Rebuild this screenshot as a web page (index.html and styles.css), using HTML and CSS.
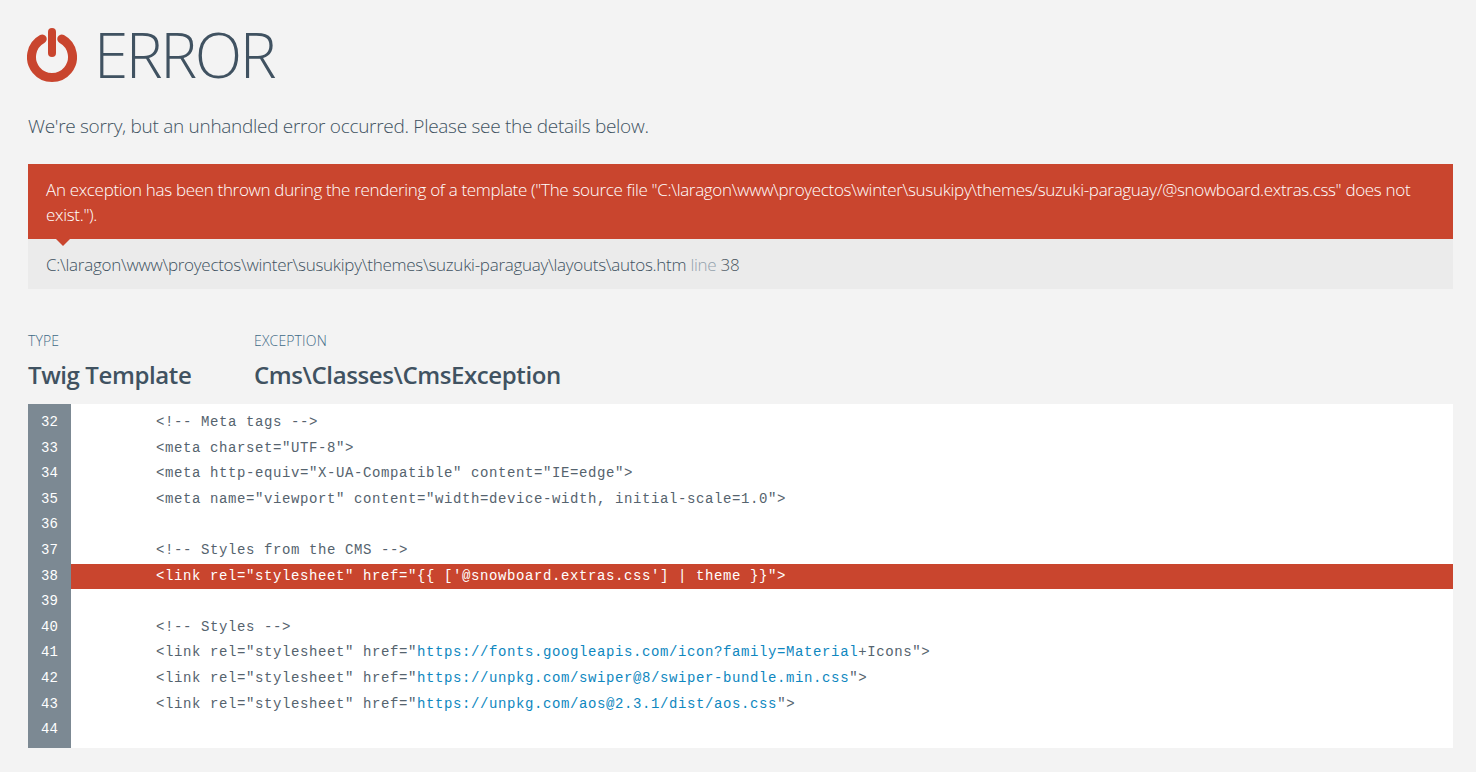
FILE: index.html
```html
<!DOCTYPE html>
<html lang="en">
<head>
<meta charset="utf-8">
<title>Error</title>
<link rel="stylesheet" href="styles.css">
</head>
<body>
<main class="page">
  <h1 class="title">
    <svg class="power" viewBox="0 0 50 56" width="50" height="56" aria-hidden="true">
      <path d="M15.2 12 A20.5 20.5 0 1 0 34.8 12" fill="none" stroke="#c9452e" stroke-width="9" stroke-linecap="round"/>
      <path d="M25 5 V26" fill="none" stroke="#c9452e" stroke-width="8" stroke-linecap="round"/>
    </svg>
    <span>ERROR</span>
  </h1>
  <p class="lead">We're sorry, but an unhandled error occurred. Please see the details below.</p>
  <section class="message">
    <p>An exception has been thrown during the rendering of a template ("The source file "C:\laragon\www\proyectos\winter\susukipy\themes/suzuki-paraguay/@snowboard.extras.css" does not exist.").</p>
  </section>
  <section class="location">C:\laragon\www\proyectos\winter\susukipy\themes\suzuki-paraguay\layouts\autos.htm <span class="muted">line</span> <span class="lineno">38</span></section>
  <section class="meta">
    <div class="meta-col type"><h3>TYPE</h3><p>Twig Template</p></div>
    <div class="meta-col"><h3>EXCEPTION</h3><p>Cms\Classes\CmsException</p></div>
  </section>
  <section class="code">
    <div class="gutter">
      <div>32</div><div>33</div><div>34</div><div>35</div><div>36</div><div>37</div><div>38</div><div>39</div><div>40</div><div>41</div><div>42</div><div>43</div><div>44</div>
    </div>
    <div class="lines">
<div class="line">        &lt;!-- Meta tags --&gt;</div>
<div class="line">        &lt;meta charset="UTF-8"&gt;</div>
<div class="line">        &lt;meta http-equiv="X-UA-Compatible" content="IE=edge"&gt;</div>
<div class="line">        &lt;meta name="viewport" content="width=device-width, initial-scale=1.0"&gt;</div>
<div class="line"> </div>
<div class="line">        &lt;!-- Styles from the CMS --&gt;</div>
<div class="line hl">        &lt;link rel="stylesheet" href="{{ ['@snowboard.extras.css'] | theme }}"&gt;</div>
<div class="line"> </div>
<div class="line">        &lt;!-- Styles --&gt;</div>
<div class="line">        &lt;link rel="stylesheet" href="<span class="url">https://fonts.googleapis.com/icon?family=Material</span>+Icons"&gt;</div>
<div class="line">        &lt;link rel="stylesheet" href="<span class="url">https://unpkg.com/swiper@8/swiper-bundle.min.css</span>"&gt;</div>
<div class="line">        &lt;link rel="stylesheet" href="<span class="url">https://unpkg.com/aos@2.3.1/dist/aos.css</span>"&gt;</div>
<div class="line"> </div>
    </div>
  </section>
</main>
</body>
</html>
```
FILE: styles.css
```css
* { box-sizing: border-box; }
html, body { margin: 0; padding: 0; }
body {
  background: #f3f3f3;
  color: #405261;
  font-family: "Open Sans", "Liberation Sans", sans-serif;
  font-weight: 300;
}
.page { padding: 24px 23px 24px 28px; }
.title {
  display: flex;
  align-items: flex-start;
  gap: 17px;
  margin: 0;
  height: 58px;
  font-size: 62px;
  line-height: 60px;
  font-weight: 300;
  letter-spacing: -2.4px;
}
.power { display: block; margin: 3px 0 0 -1px; flex: none; }
.lead { margin: 34px 0 0; font-size: 19px; line-height: 20px; letter-spacing: -0.29px; height: 20px; }
.message {
  position: relative;
  margin-top: 28px;
  background: #c9452e;
  color: #fff;
  padding: 13px 18px 10px;
  height: 75px;
  font-size: 17px;
  line-height: 25px;
  letter-spacing: -0.32px;
}
.message p { margin: 0; }
.message::after {
  content: "";
  position: absolute;
  left: 28px;
  bottom: -7px;
  border-left: 7px solid transparent;
  border-right: 7px solid transparent;
  border-top: 7px solid #c9452e;
}
.location {
  background: #ebebeb;
  height: 50px;
  padding: 13px 18px;
  font-size: 17px;
  line-height: 25.6px;
  letter-spacing: -0.28px;
}
.muted { color: #93a2ad; }
.lineno { color: #4a5660; }
.meta { display: flex; margin-top: 40px; height: 75px; }
.meta-col h3 { margin: 0; font-size: 14px; line-height: 24px; font-weight: 300; letter-spacing: 0.15px; color: #3f6a86; }
.meta-col p { margin: 5px 0 0; font-size: 24px; line-height: 34px; font-weight: 600; letter-spacing: -0.4px; }
.type { width: 226px; }
.code {
  display: flex;
  background: #fff;
  height: 344px;
  font-family: "Liberation Mono", "Courier New", monospace;
  font-weight: 400;
  font-size: 14px;
  letter-spacing: 0.6px;
  line-height: 25.6px;
}
.gutter {
  flex: none;
  width: 43px;
  background: #7c8993;
  color: #fff;
  text-align: center;
  padding-top: 6px;
  font-size: 14px;
  letter-spacing: 0;
  line-height: 25.4px;
}
.gutter div { height: 25.6px; }
.lines { flex: 1; padding-top: 6px; }
.line { white-space: pre; padding-left: 13px; height: 25.6px; line-height: 25.4px; color: #55636e; }
.hl { background: #c9452e; color: #fff; }
.url { color: #0e87c0; }
```
